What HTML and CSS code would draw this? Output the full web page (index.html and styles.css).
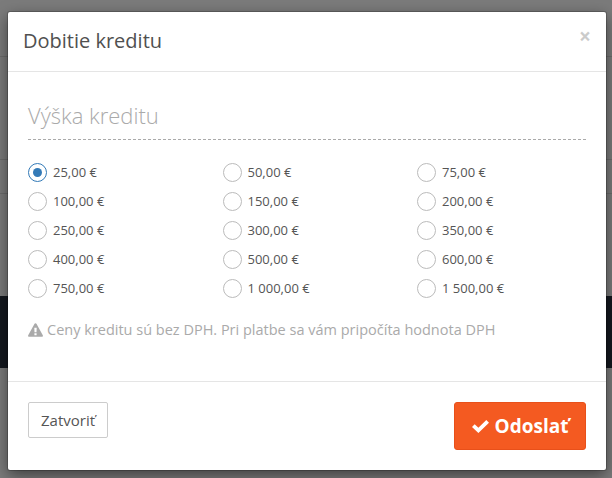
FILE: index.html
```html
<!DOCTYPE html>
<html lang="en">
<head>
	<meta charset="UTF-8">
	<title>Dobitie kreditu</title>
	<link rel="stylesheet" href="styles.css">
</head>
<body>
	<div class="page">
		<div class="page-line line1"></div>
		<div class="page-line line2"></div>
		<div class="page-line line3"></div>
		<div class="page-dark"></div>
	</div>
	<div class="modal">
		<div class="modal-header">
			<h4>Dobitie kreditu</h4>
			<span class="close">×</span>
		</div>
		<div class="modal-body">
			<h3>Výška kreditu</h3>
			<div class="options">
				<label class="option"><span class="radio checked"></span>25,00 €</label>
				<label class="option"><span class="radio"></span>50,00 €</label>
				<label class="option"><span class="radio"></span>75,00 €</label>
				<label class="option"><span class="radio"></span>100,00 €</label>
				<label class="option"><span class="radio"></span>150,00 €</label>
				<label class="option"><span class="radio"></span>200,00 €</label>
				<label class="option"><span class="radio"></span>250,00 €</label>
				<label class="option"><span class="radio"></span>300,00 €</label>
				<label class="option"><span class="radio"></span>350,00 €</label>
				<label class="option"><span class="radio"></span>400,00 €</label>
				<label class="option"><span class="radio"></span>500,00 €</label>
				<label class="option"><span class="radio"></span>600,00 €</label>
				<label class="option"><span class="radio"></span>750,00 €</label>
				<label class="option"><span class="radio"></span>1 000,00 €</label>
				<label class="option"><span class="radio"></span>1 500,00 €</label>
			</div>
			<p class="note">
				<svg class="warn" viewBox="0 0 15 14"><path fill-rule="evenodd" d="M7.5 0.300C8 0.300 8.400 0.600 8.600 1L14.800 12.300C15.200 13 14.700 13.800 13.900 13.800H1.100C0.300 13.800 -0.200 13 0.200 12.300L6.400 1C6.600 0.600 7 0.300 7.500 0.300ZM6.300 4.800L6.500 9.300H8.500L8.700 4.800ZM6.400 10.300V12.300H8.600V10.300Z"/></svg>
				Ceny kreditu sú bez DPH. Pri platbe sa vám pripočíta hodnota DPH
			</p>
		</div>
		<div class="modal-footer">
			<button class="btn-close">Zatvoriť</button>
			<button class="btn-send">
				<svg class="check" viewBox="0 0 17 13"><path d="M6.400 13 0 6.900 2.700 4.200 6.400 7.800 14.300 0 17 2.700z"/></svg>
				Odoslať
			</button>
		</div>
	</div>
</body>
</html>
```

FILE: styles.css
```css
body{
	margin: 0;
	width: 612px;
	height: 478px;
	overflow: hidden;
	background-color: #7b7b7b;
	font-family: "Open Sans", sans-serif;
	position: relative;
}
.page-line{
	position: absolute;
	left: 0;
	right: 0;
	height: 1px;
	background-color: #6c6c6c;
}
.line1{top: 56px;}
.line2{top: 159px;}
.line3{top: 193px;}
.page-dark{
	position: absolute;
	left: 0;
	right: 0;
	top: 296px;
	height: 72px;
	background-color: #14181f;
}
.modal{
	position: absolute;
	left: 8px;
	top: 12px;
	width: 598px;
	height: 458px;
	background-color: #fff;
	border-radius: 2px;
	box-shadow: 0 0 0 1px rgba(0,0,0,.2), 0 5px 15px rgba(0,0,0,.5);
	display: flex;
	flex-direction: column;
}
.modal-header{
	height: 59px;
	border-bottom: 1px solid #e5e5e5;
	padding: 0 15px;
	display: flex;
	justify-content: space-between;
	align-items: flex-start;
}
.modal-header h4{
	margin: 15px 0 0;
	font-size: 20px;
	line-height: 27px;
	font-weight: 400;
	color: #505050;
}
.close{
	margin-top: 14px;
	font-size: 21px;
	line-height: 21px;
	font-weight: 700;
	color: #000;
	opacity: .2;
}
.modal-body{
	flex: 1;
	padding: 28px 20px 0;
}
.modal-body h3{
	margin: 0;
	height: 39px;
	font-size: 22px;
	line-height: 30px;
	font-weight: 300;
	color: #aaa;
	border-bottom: 1px dashed #aaa;
}
.options{
	margin-top: 17px;
	display: grid;
	grid-template-columns: repeat(3, 194.500px);
	grid-auto-rows: 29px;
}
.option{
	display: flex;
	align-items: center;
	gap: 6px;
	font-size: 13px;
	color: #555;
}
.radio{
	width: 17px;
	height: 17px;
	margin-top: 2px;
	border: 1px solid #bbb;
	border-radius: 50%;
	flex: none;
	position: relative;
}
.radio.checked{border-color: #337ab7;}
.radio.checked::after{
	content: "";
	position: absolute;
	left: 4px;
	top: 4px;
	width: 9px;
	height: 9px;
	border-radius: 50%;
	background-color: #337ab7;
}
.note{
	margin: 18px 0 0;
	font-size: 14.500px;
	line-height: 20px;
	color: #aaa;
	display: flex;
	align-items: center;
	gap: 4px;
}
.warn{
	width: 15px;
	height: 14px;
	fill: #aaa;
	flex: none;
}
.modal-footer{
	box-sizing: border-box;
	height: 89px;
	border-top: 1px solid #e5e5e5;
	padding: 20px 20px 0;
	display: flex;
	justify-content: space-between;
	align-items: flex-start;
}
.btn-close{
	width: 80px;
	height: 36px;
	background-color: #fff;
	border: 1px solid #ccc;
	border-radius: 2px;
	font-family: inherit;
	font-size: 15px;
	color: #555;
	padding: 0;
}
.btn-send{
	width: 132px;
	height: 48px;
	background-color: #f45a21;
	border: 1px solid #e8501a;
	border-radius: 3px;
	font-family: inherit;
	font-size: 19px;
	font-weight: 700;
	color: #fff;
	padding: 0;
	display: flex;
	align-items: center;
	justify-content: center;
	gap: 6px;
}
.check{
	width: 17px;
	height: 13px;
	fill: #fff;
}
```
